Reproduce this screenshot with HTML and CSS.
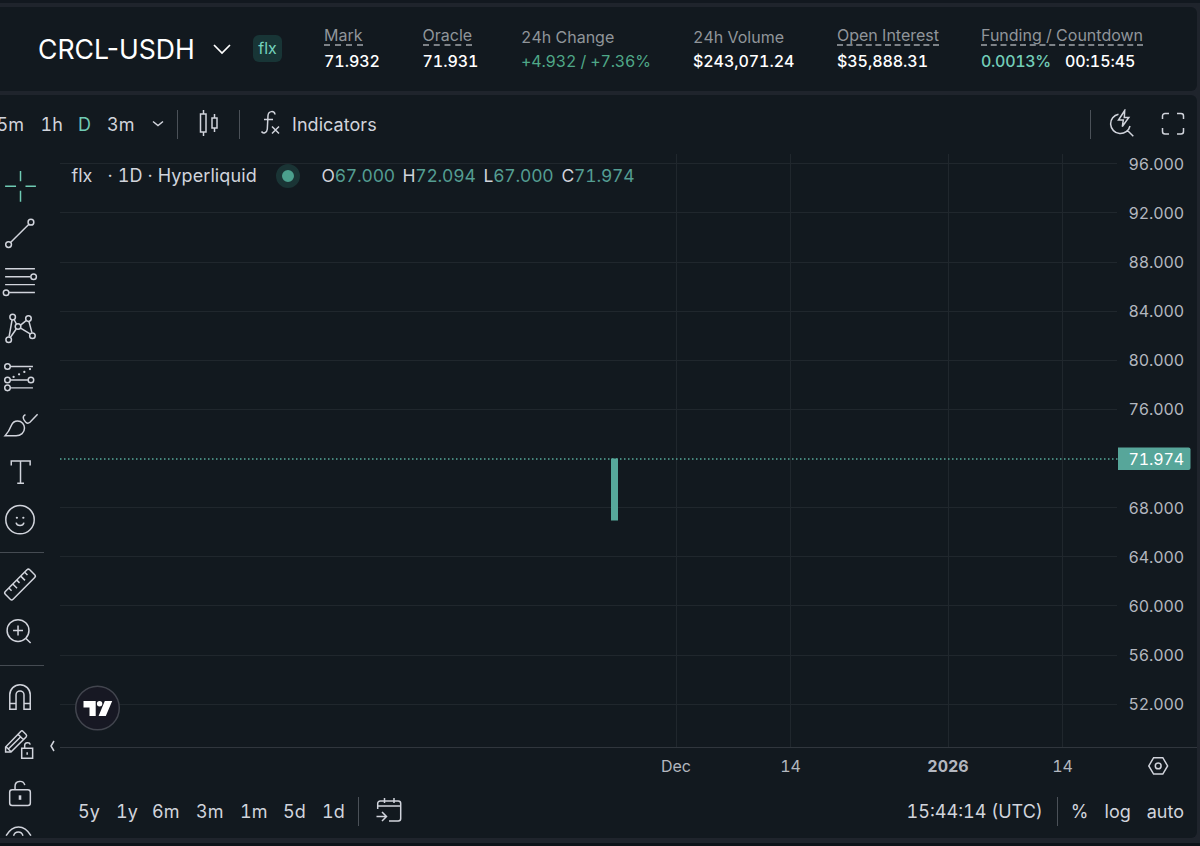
FILE: index.html
```html
<!DOCTYPE html>
<html lang="en">
<head>
  <meta charset="UTF-8">
  <meta name="viewport" content="width=device-width, initial-scale=1.0">
  <title>CRCL-USDH</title>
  <link rel="stylesheet" href="styles.css">
</head>
<body>
  <div class="strip strip-top"></div>

  <header class="market panel">
    <div class="pair">
      <span class="pair-name">CRCL-USDH</span>
      <svg class="pair-arrow" width="20" height="12" viewBox="0 0 20 12"><path d="M2 2l8 8 8-8"/></svg>
      <span class="tag">flx</span>
    </div>
    <div class="stats">
      <div class="stat"><span class="label dashed">Mark</span><span class="value">71.932</span></div>
      <div class="stat"><span class="label dashed">Oracle</span><span class="value">71.931</span></div>
      <div class="stat"><span class="label">24h Change</span><span class="value up">+4.932 / +7.36%</span></div>
      <div class="stat"><span class="label">24h Volume</span><span class="value">$243,071.24</span></div>
      <div class="stat"><span class="label dashed">Open Interest</span><span class="value">$35,888.31</span></div>
      <div class="stat"><span class="label dashed">Funding / Countdown</span><span class="value"><span class="funding">0.0013%</span>00:15:45</span></div>
    </div>
  </header>

  <main class="chart panel">
    <div class="toolbar">
      <div class="intervals">
        <span>5m</span>
        <span>1h</span>
        <span class="active">D</span>
        <span>3m</span>
      </div>
      <svg class="icon more" width="12" height="8" viewBox="0 0 12 8"><path d="M1 1.5l5 4 5-4"/></svg>
      <i class="divider"></i>
      <svg class="icon candles" width="20" height="28" viewBox="0 0 20 28"><path d="M4.5 1v4M4.5 23v4M1.5 5h5.5v18H1.5zM15.500 5v4M15.500 19v4M13 9h5v10h-5z"/></svg>
      <i class="divider"></i>
      <svg class="icon fx" width="20" height="26" viewBox="0 0 20 26"><path d="M15 4.500c-.5-4-6.500-4-7 1L7.300 19c-.3 4-4.300 5-5.800 2.500M4 9.500h9M12 16.500l7 7M19 16.500l-7 7"/></svg>
      <span class="indicators">Indicators</span>
      <div class="toolbar-right">
        <i class="divider"></i>
        <svg class="icon quick" width="26" height="29" viewBox="0 0 26 29"><path d="M9.500 5.200A9.800 9.800 0 1 0 21 17M18.500 21.500l5.800 5.800M15.700 1.500L9.500 11h4.800l-1 6.500L19.800 8.500h-4.500z"/></svg>
        <svg class="icon full" width="24" height="24" viewBox="0 0 24 24"><path d="M1.500 7V4a2.500 2.500 0 0 1 2.500-2.500h4M16 1.500h4A2.500 2.500 0 0 1 22.500 4v3M22.500 16v3.500A2.500 2.500 0 0 1 20 22h-4M8 22H4a2.500 2.500 0 0 1-2.500-2.500V16"/></svg>
      </div>
    </div>

    <div class="workspace">
      <nav class="tools">
        <svg class="tool cross" viewBox="0 0 44 48"><path d="M5 24.300h11M25.500 24.300H36M20.500 9v10.500M20.500 29v11"/></svg>
        <svg class="tool" viewBox="0 0 44 48"><path d="M10.700 32.500l18-18"/><circle cx="8.500" cy="34.800" r="2.900"/><circle cx="31" cy="12.300" r="2.900"/></svg>
        <svg class="tool" viewBox="0 0 44 48"><path d="M5 10.800h30M5 18.800h25.500M5 26.800h30M9 34.800h26"/><circle cx="33.700" cy="18.900" r="2.800"/><circle cx="6" cy="34.900" r="2.800"/></svg>
        <svg class="tool" viewBox="0 0 44 48"><path d="M9 31.800l3-16.700M14 14.600l2.500 4.800M10.400 32.500l5.800-8.300M20.600 20.200l5.500-4.500M29 16.600l3 11.200M20.600 23.200l9.600 5.800"/><circle cx="12.600" cy="12.200" r="2.800"/><circle cx="28.500" cy="13.700" r="2.800"/><circle cx="18" cy="21.700" r="2.800"/><circle cx="32.500" cy="30.900" r="2.800"/><circle cx="8.600" cy="34.900" r="2.800"/></svg>
        <svg class="tool" viewBox="0 0 44 48"><path d="M10 13.600h23M10 27.100h18M10 35.100h23"/><path class="dots" d="M13.500 24.100h.1M19 21.500h.1M24.300 19h.1M30 16.200h.1"/><circle cx="7.400" cy="13.600" r="2.800"/><circle cx="7.400" cy="27.100" r="2.800"/><circle cx="31" cy="27.100" r="2.800"/><circle cx="7.400" cy="35.100" r="2.800"/></svg>
        <svg class="tool" viewBox="0 0 44 48"><path d="M5 35c3.500-3.800 5-7 6.500-10.800 1.300-3 3.600-4 6-4 4.500 0 7 3.300 7 7 0 4.500-3.700 7.800-8.500 7.800zM25.500 13.700c-3.500 1.500-2.500 5 .3 7.700 1.500 1.400 2.800 1.200 4.200 0l7.700-8"/></svg>
        <svg class="tool" viewBox="0 0 44 48"><path d="M11.200 17.500v-4.500h19v4.500M20.500 13V35.500M17.200 35.500h6.800"/></svg>
        <svg class="tool" viewBox="0 0 44 48"><circle cx="20" cy="23.800" r="14.300"/><path d="M16 26.800c1 4 7 4 8 0"/><path class="dots" d="M16.800 21.900h.1M23.300 21.900h.1"/></svg>
        <i class="rule"></i>
        <svg class="tool" viewBox="0 0 44 48"><path d="M27 8.900a2 2 0 0 1 2.800 0l5 5a2 2 0 0 1 0 2.800L13 38.500a2 2 0 0 1-2.800 0l-5-5a2 2 0 0 1 0-2.800zM9 27.500l2.500 2.500M13 23.500l4 4M17 19.500l2.500 2.500M21 15.500l4 4M25 11.500l2.500 2.500"/></svg>
        <svg class="tool" viewBox="0 0 44 48"><circle cx="18" cy="21.700" r="11"/><path d="M26 29.600l4.700 4.700M13 21.700h10M18 16.700v10"/></svg>
        <i class="rule"></i>
        <svg class="tool" viewBox="0 0 44 48"><path d="M9.700 35.500V21a10.300 10.300 0 0 1 20.600 0v14.500H24V21a4 4 0 0 0-8 0v14.500zM9.700 29.600H16M24 29.600h6.300"/></svg>
        <svg class="tool" viewBox="0 0 44 48"><path d="M5.500 30.200v-5L20.700 9.600c1-.9 1.600-.9 2.400 0l3 3c.8.9.8 1.500 0 2.400L10.900 30.200zM6 25l5 5M18 12.300l5.300 5.400M20.500 15L8.500 27M21.700 26.500h11v10h-11zM24.700 26.500v-3c0-3 5-3.500 5.600-.7M27.200 30.500v2.500"/></svg>
        <svg class="tool" viewBox="0 0 44 48"><rect x="9.600" y="21" width="20.800" height="15.700" rx="2.500"/><path d="M15 20.800V17.300c0-6 8.500-6.500 9.800-1"/><path class="key" d="M20 26.500v4.500"/></svg>
        <svg class="tool" viewBox="0 0 44 48"><path d="M6 18.800c7-11.500 18-11.500 25 0M13.500 18.800c1.500-5 8-5 9.500 0"/></svg>
      </nav>

      <div class="board">
        <div class="plot">
          <svg class="canvas" width="1137" height="634" viewBox="60 153 1137 634">
            <g class="grid">
              <path d="M60 163.500h1057M60 212.500h1057M60 262.500h1057M60 311.500h1057M60 360.500h1057M60 409.500h1057M60 507.500h1057M60 556.500h1057M60 605.500h1057M60 655.500h1057M60 704.500h1057"/>
              <path d="M676.500 154v593M790.500 154v593M948.500 154v593M1062.500 154v593"/>
            </g>
            <path class="axis" d="M60 747.500h1137"/>
            <path class="price-line" d="M60 459h1058"/>
            <rect class="candle" x="611" y="458.500" width="7" height="62"/>
            <g class="prices">
              <text x="1128.500" y="169.500">96.000</text>
              <text x="1128.500" y="218.600">92.000</text>
              <text x="1128.500" y="267.800">88.000</text>
              <text x="1128.500" y="316.900">84.000</text>
              <text x="1128.500" y="366.100">80.000</text>
              <text x="1128.500" y="415.200">76.000</text>
              <text x="1128.500" y="513.500">68.000</text>
              <text x="1128.500" y="562.600">64.000</text>
              <text x="1128.500" y="611.700">60.000</text>
              <text x="1128.500" y="660.900">56.000</text>
              <text x="1128.500" y="710">52.000</text>
            </g>
            <path class="price-box" d="M1118 447.500h70.500a2 2 0 0 1 2 2v18.500a2 2 0 0 1-2 2h-70.500z"/>
            <text class="price-now" x="1128.500" y="464.500">71.974</text>
            <g class="dates">
              <text x="676" y="771.500">Dec</text>
              <text x="790.500" y="771.500">14</text>
              <text class="year" x="948" y="771.500">2026</text>
              <text x="1062.500" y="771.500">14</text>
            </g>
            <g class="hexagon">
              <path d="M1153.600 757.700h9.200l4.800 8.200-4.800 8.200h-9.200l-4.800-8.200z"/>
              <circle cx="1158.200" cy="765.900" r="2.900"/>
            </g>
            <g class="tv-logo">
              <circle cx="97.500" cy="708" r="21.800"/>
              <path d="M83.500 701h12.200v15h-6.200v-8.600h-6zM104.800 701h7.400l-6.400 15h-7.200z"/>
              <circle class="dot" cx="99.600" cy="703.800" r="2.700"/>
            </g>
          </svg>
          <svg class="collapse" width="7" height="14" viewBox="0 0 7 14"><path d="M5 2L2 7l3 5"/></svg>
          <div class="legend">
            <span class="symbol">flx</span>
            <span class="source">· 1D · Hyperliquid</span>
            <i class="status"></i>
            <span class="ohlc">O<b>67.000</b></span>
            <span class="ohlc">H<b>72.094</b></span>
            <span class="ohlc low">L<b>67.000</b></span>
            <span class="ohlc">C<b>71.974</b></span>
          </div>
        </div>

        <div class="footer">
          <div class="ranges">
            <span>5y</span>
            <span>1y</span>
            <span>6m</span>
            <span>3m</span>
            <span>1m</span>
            <span>5d</span>
            <span>1d</span>
          </div>
          <i class="divider"></i>
          <svg class="icon goto" width="28" height="26" viewBox="0 0 28 26"><path d="M2.700 12V6.500A2.500 2.500 0 0 1 5.200 4h18a2.500 2.500 0 0 1 2.500 2.500v15a2.500 2.500 0 0 1-2.500 2.500H14M2.700 9h23M9.500 1v5M19 1v5M1.500 19.500H11M7 15l4.500 4.500L7 24"/></svg>
          <div class="footer-right">
            <span class="clock">15:44:14 (UTC)</span>
            <i class="divider"></i>
            <span class="pct">%</span>
            <span class="log">log</span>
            <span class="auto">auto</span>
          </div>
        </div>
      </div>
    </div>
  </main>

  <div class="strip strip-bottom"></div>
</body>
</html>
```
FILE: styles.css
```css
* {
  box-sizing: border-box;
}

body {
  margin: 0;
  height: 846px;
  overflow: hidden;
  display: flex;
  flex-direction: column;
  gap: 4px;
  background: #1f242c;
  color: #d1d4dc;
  font-family: Inter, "Liberation Sans", sans-serif;
  font-size: 18px;
  font-variant-numeric: tabular-nums;
}

svg {
  display: block;
  flex: none;
  fill: none;
  stroke: #d1d4dc;
  stroke-width: 1.5;
}

.strip {
  height: 3px;
  background: #12181f;
}

.strip-bottom {
  margin-top: 1px;
  background: #0d1319;
}

.panel {
  width: 1197px;
  background: #12191f;
  border-radius: 0 6px 6px 0;
}

/* market header */
.market {
  height: 84px;
  display: flex;
  align-items: center;
}

.pair {
  width: 324px;
  display: flex;
  align-items: center;
  padding: 0 0 1px 38px;
  color: #fff;
}

.pair-name {
  width: 174px;
  font-size: 26.6px;
  font-variant-numeric: normal;
  white-space: nowrap;
}

.pair-arrow {
  stroke: #fff;
  stroke-width: 1.7;
}

.tag {
  width: 29px;
  height: 27px;
  margin-left: 21px;
  border-radius: 6px;
  background: #183536;
  color: #74d3bd;
  font-size: 16px;
  line-height: 26px;
  text-align: center;
}

.stats {
  display: grid;
  grid-template-columns: 98.5px 98.5px 172px 144px 144px 200px;
}

.stat {
  display: flex;
  flex-direction: column;
  align-items: flex-start;
  white-space: nowrap;
}

.label {
  height: 20px;
  margin-bottom: 4px;
  color: #90959a;
  font-size: 16px;
  line-height: 22px;
}

.dashed {
  border-bottom: 2px dashed #7d8287;
  line-height: 19px;
}

.value {
  color: #fff;
  font-size: 16px;
  font-weight: 500;
  line-height: 22px;
  letter-spacing: -0.05px;
}

.up {
  color: #4fa888;
  font-weight: 400;
  letter-spacing: -0.15px;
}

.funding {
  margin-right: 14px;
  color: #72cdb8;
  letter-spacing: -0.3px;
}

/* chart */
.chart {
  height: 743px;
  overflow: hidden;
}

.toolbar {
  height: 58px;
  display: flex;
  align-items: center;
}

.divider {
  flex: none;
  width: 1px;
  height: 29px;
  background: #4b5158;
}

.intervals {
  display: grid;
  grid-template-columns: 44px 37.5px 29px 43px;
  margin-left: -3.5px;
}

.active {
  color: #6fcbb4;
}

.more {
  margin: 0 13px 0 2px;
}

.candles {
  margin: -2px 20px 0 21px;
}

.fx {
  margin: -2px 12px 0 20px;
}

.indicators {
  letter-spacing: 0.05px;
}

.toolbar-right {
  display: flex;
  align-items: center;
  margin-left: auto;
  padding-right: 13px;
}

.quick {
  margin: -2px 25.5px 0 18px;
}

.full {
  margin: -1px -0.5px 0 0;
}

.workspace {
  display: flex;
  height: 685px;
}

/* drawing tools */
.tools {
  width: 60px;
  height: 683px;
  padding-top: 9.2px;
  overflow: hidden;
}

.tool {
  width: 44px;
  height: 47.7px;
}

.cross {
  stroke: #6fcbb4;
}

.dots {
  stroke-width: 2.2;
  stroke-linecap: round;
}

.key {
  stroke-width: 2.6;
}

.rule {
  display: block;
  width: 44px;
  height: 1.5px;
  margin: 8px 0;
  background: #454b52;
}

.board {
  flex: 1;
}

.plot {
  position: relative;
  height: 634px;
}

.grid {
  stroke: #20272d;
  stroke-width: 1;
}

.axis {
  stroke: #30363d;
  stroke-width: 1;
}

.price-line {
  stroke: #57a99b;
  stroke-dasharray: 1.5 2.5;
}

.candle {
  fill: #57a99b;
  stroke: none;
}

.canvas text {
  stroke: none;
  fill: #b3b7bf;
  font-size: 16px;
}

.canvas .prices text,
.canvas .price-now {
  letter-spacing: -0.1px;
}

.price-box {
  fill: #57a69a;
  stroke: none;
}

.canvas .price-now {
  fill: #fff;
}

.dates {
  text-anchor: middle;
}

.canvas .year {
  font-weight: 700;
}

.tv-logo {
  fill: #fff;
  stroke: none;
}

.tv-logo circle:first-child {
  fill: #171823;
  stroke: #42454e;
  stroke-width: 1.5;
}

.collapse {
  position: absolute;
  left: -11px;
  top: 586px;
}

.legend {
  position: absolute;
  left: 11.5px;
  top: 10.5px;
  display: flex;
  align-items: center;
  height: 24px;
  white-space: nowrap;
}

.symbol {
  width: 36px;
}

.source {
  width: 168.500px;
  letter-spacing: 0.1px;
}

.status {
  width: 24px;
  height: 24px;
  margin-right: 21.500px;
  border: 6.5px solid #1a3435;
  border-radius: 50%;
  background: #4b9f8d;
}

.ohlc {
  width: 81px;
  font-size: 17.5px;
  letter-spacing: -0.2px;
}

.low {
  width: 78px;
}

.ohlc b {
  color: #549d92;
  font-weight: 400;
}

/* bottom bar */
.footer {
  display: flex;
  align-items: center;
  height: 48px;
}

.ranges {
  display: grid;
  grid-template-columns: 38px 36px 44px 44px 43px 39px 36px;
  margin-left: 18px;
}

.goto {
  margin: -3px 0 0 16px;
}

.footer-right {
  display: flex;
  align-items: center;
  margin-left: auto;
  padding-right: 13px;
}

.clock {
  margin-right: 14px;
}

.pct {
  margin-left: 13px;
}

.log {
  margin: 0 16px;
}
```
